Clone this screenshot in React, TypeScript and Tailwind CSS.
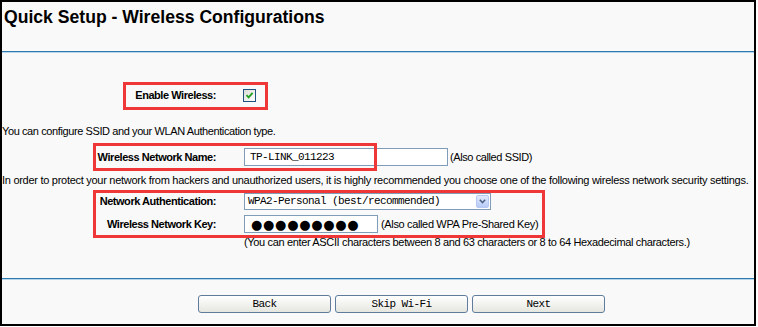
import React from 'react';

const sans = { fontFamily: '"Liberation Sans", Arial, sans-serif' };
const mono = { fontFamily: '"Liberation Mono", "Courier New", monospace' };

const Rule = () => (
  <div className="w-full">
    <div className="h-px bg-[#2c7ab0]" />
    <div className="h-px bg-[#b8d5ea]" />
  </div>
);

const Label: React.FC<{ children: React.ReactNode }> = ({ children }) => (
  <div className="w-[214px] shrink-0 text-right text-[11px] font-bold tracking-[-0.45px] text-black">
    {children}
  </div>
);

const Checkbox = () => (
  <div className="flex h-[13px] w-[13px] items-center justify-center border border-[#1c5180] bg-gradient-to-br from-[#dcdcd7] to-white">
    <svg width="9" height="9" viewBox="0 0 9 9">
      <path d="M1.5 4.2 L3.6 6.4 L7.6 1.8" fill="none" stroke="#21a121" strokeWidth="1.8" />
    </svg>
  </div>
);

const Button: React.FC<{ children: React.ReactNode }> = ({ children }) => (
  <button
    className="flex h-[18px] w-[133px] items-center justify-center rounded-[3px] border border-[#5f7c9c] bg-gradient-to-b from-white to-[#e6e6e0] text-[11px] tracking-[-0.6px] text-black"
    style={mono}
  >
    {children}
  </button>
);

const Highlight: React.FC<{ className: string }> = ({ className }) => (
  <div className={`pointer-events-none absolute border-[3px] border-[#ef3737] ${className}`} />
);

export default function App() {
  return (
    <div className="h-[327px] w-[758px] bg-white" style={sans}>
      <div className="relative flex h-[326px] w-[756px] flex-col border-2 border-black bg-[#f9f9f9]">
        {/* Title */}
        <div className="h-[49px] pl-[2px] pt-[5px] text-[17.6px] font-bold leading-[20px] text-black">
          Quick Setup - Wireless Configurations
        </div>
        <Rule />

        {/* Enable Wireless */}
        <div className="mt-[31px] flex h-[22px] items-center">
          <Label>Enable Wireless:</Label>
          <div className="ml-[27px]">
            <Checkbox />
          </div>
        </div>

        <div className="mt-[18px] flex h-[14px] items-center text-[11px] tracking-[-0.4px] text-black">
          You can configure SSID and your WLAN Authentication type.
        </div>

        {/* SSID */}
        <div className="mt-[10px] flex h-[18px] items-center">
          <Label>Wireless Network Name:</Label>
          <div
            className="ml-[28px] flex h-[18px] w-[204px] items-center border border-[#7f9db9] bg-white pl-[5px] text-[11px] tracking-[-0.6px] text-black"
            style={mono}
          >
            TP-LINK_011223
          </div>
          <span className="ml-[2px] text-[11px] tracking-[-0.4px] text-black">(Also called SSID)</span>
        </div>

        <div className="mt-[7px] flex h-[14px] items-center whitespace-nowrap text-[11px] tracking-[-0.28px] text-black">
          In order to protect your network from hackers and unauthorized users, it is highly recommended you choose one of the following wireless network security settings.
        </div>

        {/* Authentication */}
        <div className="mt-[5px] flex h-[18px] items-center">
          <Label>Network Authentication:</Label>
          <div className="ml-[28px] flex h-[17px] w-[247px] items-center border border-[#7f9db9] bg-white">
            <span className="flex-1 pl-[3px] text-[11px] tracking-[-0.6px] text-black" style={mono}>
              WPA2-Personal (best/recommended)
            </span>
            <div className="mr-px flex h-[13px] w-[13px] items-center justify-center rounded-[2px] border border-[#b6c9f5] bg-gradient-to-b from-[#e2ebfd] to-[#b7cbf7]">
              <svg width="7" height="5" viewBox="0 0 7 5">
                <path d="M0.8 0.8 L3.5 3.6 L6.2 0.8" fill="none" stroke="#4d6185" strokeWidth="1.5" />
              </svg>
            </div>
          </div>
        </div>

        {/* Key */}
        <div className="mt-[5px] flex h-[18px] items-center">
          <Label>Wireless Network Key:</Label>
          <div
            className="ml-[28px] flex h-[18px] w-[134px] items-center overflow-hidden border border-[#7f9db9] bg-white pl-[6px] text-[13px] leading-none tracking-[0.7px] text-black"
            style={{ fontFamily: '"DejaVu Sans", sans-serif' }}
          >
            ●●●●●●●●●
          </div>
          <span className="ml-[3px] text-[11px] tracking-[-0.35px] text-black">(Also called WPA Pre-Shared Key)</span>
        </div>

        <div className="mt-[2px] flex h-[14px] items-center pl-[242px] text-[11px] tracking-[-0.35px] text-black">
          (You can enter ASCII characters between 8 and 63 characters or 8 to 64 Hexadecimal characters.)
        </div>

        <div className="mt-[29px]">
          <Rule />
        </div>

        {/* Buttons */}
        <div className="mt-[15px] flex gap-[4px] pl-[196px]">
          <Button>Back</Button>
          <Button>Skip Wi-Fi</Button>
          <Button>Next</Button>
        </div>

        <Highlight className="left-[121px] top-[80px] h-[28px] w-[145px]" />
        <Highlight className="left-[91px] top-[141px] h-[28px] w-[284px]" />
        <Highlight className="left-[91px] top-[188px] h-[48px] w-[452px]" />
      </div>
    </div>
  );
}
